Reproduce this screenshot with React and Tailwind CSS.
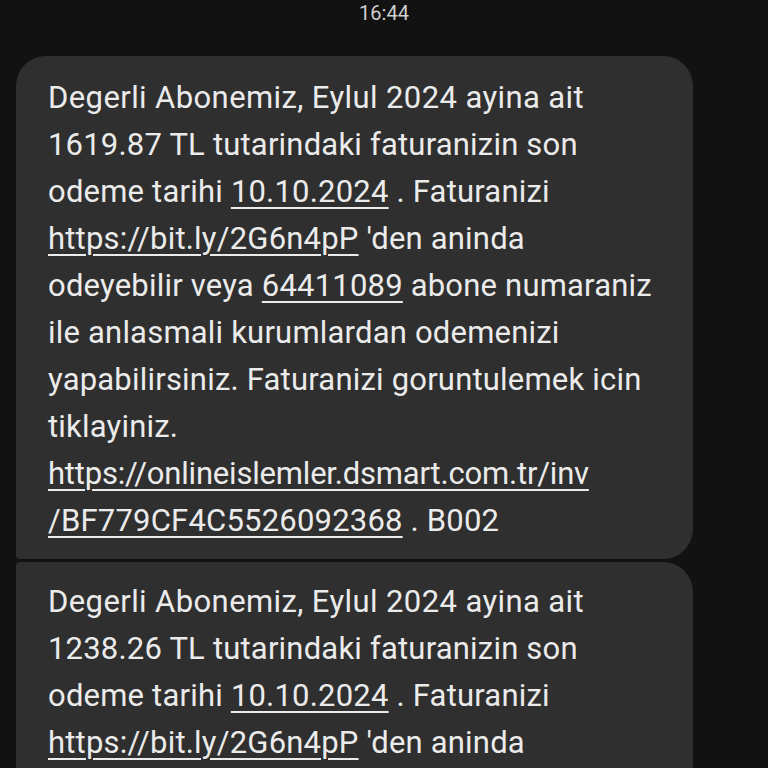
import React from 'react';

const messages = [
  {
    amount: '1619.87',
    subscriber: '64411089',
    invoice: '/BF779CF4C5526092368',
  },
  {
    amount: '1238.26',
    subscriber: '64411089',
    invoice: '/BF779CF4C5526092368',
  },
];

const Link = ({ children }) => (
  <span className="underline decoration-[2px] underline-offset-[5px]">{children}</span>
);

const MessageBody = ({ amount, subscriber, invoice }) => (
  <div className="whitespace-nowrap">
    <div className="tracking-[0.4px]">Degerli Abonemiz, Eylul 2024 ayina ait</div>
    <div>{amount} TL tutarindaki faturanizin son</div>
    <div>
      odeme tarihi <Link>10.10.2024</Link> . Faturanizi
    </div>
    <div>
      <Link>https://bit.ly/2G6n4pP</Link> 'den aninda
    </div>
    <div>
      odeyebilir veya <Link>{subscriber}</Link> abone numaraniz
    </div>
    <div>ile anlasmali kurumlardan odemenizi</div>
    <div>yapabilirsiniz. Faturanizi goruntulemek icin</div>
    <div>tiklayiniz.</div>
    <div className="tracking-[-0.2px]">
      <Link>https://onlineislemler.dsmart.com.tr/inv</Link>
    </div>
    <div>
      <Link>{invoice}</Link> . B002
    </div>
  </div>
);

const App = () => {
  return (
    <div
      className="h-[768px] w-[768px] overflow-hidden bg-[#121212] text-[#ebebeb]"
      style={{ fontFamily: 'Roboto, "Noto Sans", sans-serif' }}
    >
      {/* Timestamp */}
      <div className="h-[56px] pt-[1px] text-center text-[20px] leading-[24px] text-[#cfcfcf]">
        16:44
      </div>

      {/* Message bubbles */}
      <div className="flex flex-col gap-[3px] pl-[16px]">
        {messages.map((m, i) => (
          <div
            key={i}
            className={
              i === 0
                ? 'w-[677px] rounded-[30px] rounded-bl-[4px] bg-[#2f2f2f] pl-[32px] pt-[18px] pb-[15px] text-[31px] leading-[47px] tracking-[0.2px]'
                : 'w-[677px] rounded-[30px] rounded-tl-[4px] bg-[#2f2f2f] pl-[32px] pt-[16px] pb-[15px] text-[31px] leading-[47px] tracking-[0.2px]'
            }
          >
            <MessageBody {...m} />
          </div>
        ))}
      </div>
    </div>
  );
};

export default App;
